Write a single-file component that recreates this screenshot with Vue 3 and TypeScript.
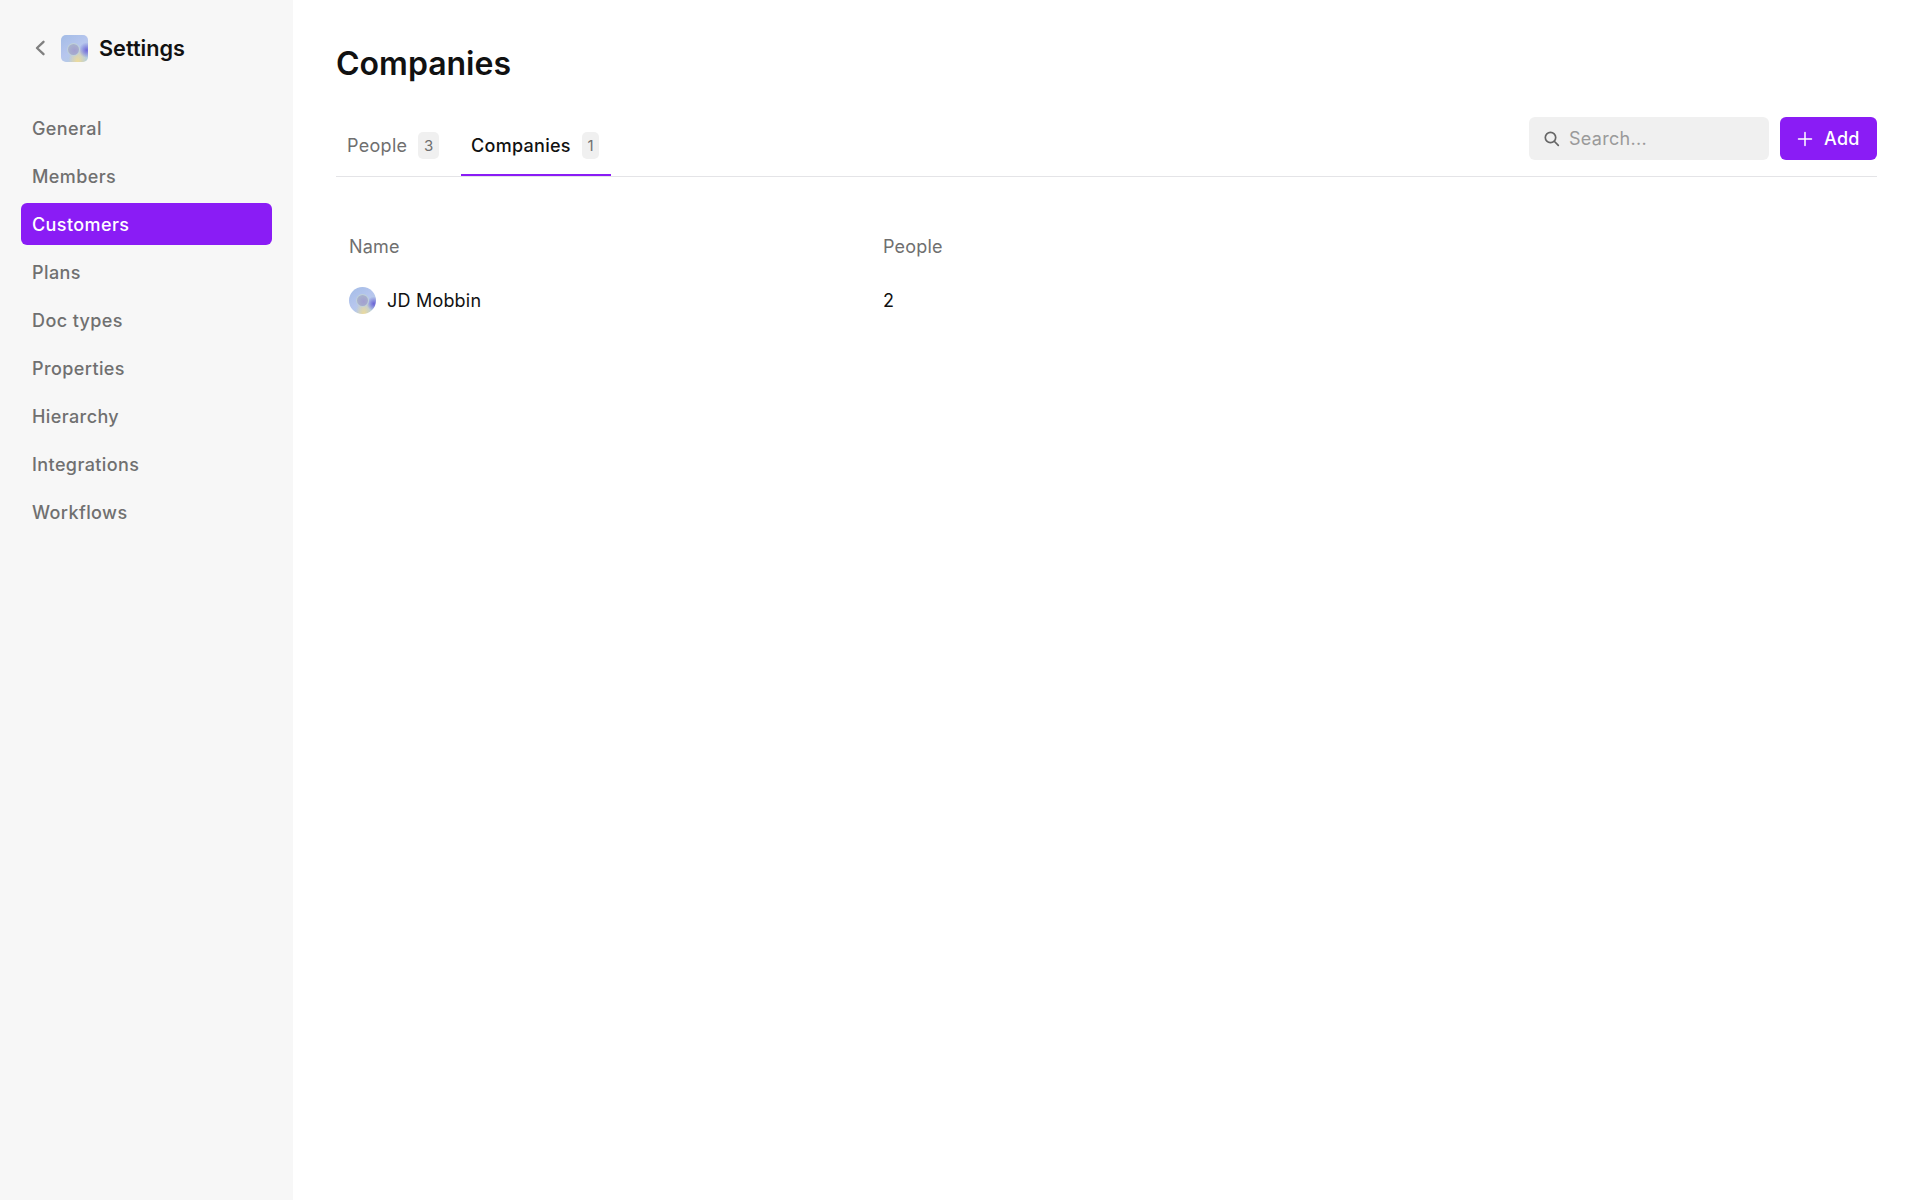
<template>
  <div class="app">
    <aside class="sidebar">
      <div class="side-head">
        <svg class="back" width="12" height="16" viewBox="0 0 12 16" fill="none">
          <path d="M9.5 1.8 3 8l6.5 6.2" stroke="#808080" stroke-width="2.4" stroke-linecap="round" stroke-linejoin="round" />
        </svg>
        <div class="logo"><span class="logo-dot" /></div>
        <span class="side-title">Settings</span>
      </div>
      <nav class="nav">
        <a v-for="item in navItems" :key="item" class="nav-item" :class="{ active: item === 'Customers' }">{{ item }}</a>
      </nav>
    </aside>

    <main class="main">
      <h1 class="title">Companies</h1>
      <div class="tabbar">
        <div class="tabs">
          <div v-for="tab in tabs" :key="tab.label" class="tab" :class="{ selected: tab.label === 'Companies' }">
            <span>{{ tab.label }}</span>
            <span class="count">{{ tab.count }}</span>
          </div>
        </div>
        <div class="actions">
          <div class="search">
            <svg width="17" height="17" viewBox="0 0 17 17" fill="none">
              <circle cx="7.5" cy="7.5" r="5.2" stroke="#666" stroke-width="1.7" />
              <path d="m11.5 11.5 3.8 3.8" stroke="#666" stroke-width="1.7" stroke-linecap="round" />
            </svg>
            <span class="placeholder">Search...</span>
          </div>
          <button class="add">
            <svg width="16" height="16" viewBox="0 0 16 16" fill="none">
              <path d="M8 1.5v13M1.5 8h13" stroke="#fff" stroke-width="1.5" stroke-linecap="round" />
            </svg>
            Add
          </button>
        </div>
      </div>

      <table class="table">
        <thead>
          <tr>
            <th class="col-name">Name</th>
            <th>People</th>
          </tr>
        </thead>
        <tbody>
          <tr v-for="row in rows" :key="row.name">
            <td>
              <div class="company">
                <div class="avatar"><span class="avatar-dot" /></div>
                {{ row.name }}
              </div>
            </td>
            <td>{{ row.people }}</td>
          </tr>
        </tbody>
      </table>
    </main>
  </div>
</template>

<script setup lang="ts">
const navItems: string[] = [
  'General',
  'Members',
  'Customers',
  'Plans',
  'Doc types',
  'Properties',
  'Hierarchy',
  'Integrations',
  'Workflows',
]

const tabs = [
  { label: 'People', count: 3 },
  { label: 'Companies', count: 1 },
]

const rows = [{ name: 'JD Mobbin', people: 2 }]
</script>

<style>
body {
  background: #fff;
}
</style>

<style scoped>
.app {
  display: flex;
  min-height: 1200px;
  font-family: Inter, "Liberation Sans", sans-serif;
  color: #111;
}

.sidebar {
  width: 293px;
  flex-shrink: 0;
  background: #f7f7f7;
  padding: 0 21px;
  box-sizing: border-box;
}

.side-head {
  display: flex;
  align-items: center;
  height: 96px;
  padding-left: 13px;
}

.back {
  margin-right: 15px;
}

.logo {
  width: 27px;
  height: 27px;
  border-radius: 5px;
  margin-right: 11px;
  position: relative;
  overflow: hidden;
  background:
    radial-gradient(circle at 95% 56%, #7069d8 0, rgba(112, 105, 216, 0) 26%),
    radial-gradient(ellipse at 62% 100%, #efdb98 0, rgba(239, 219, 152, 0) 40%),
    linear-gradient(145deg, #a3bce6 0%, #b7c6ee 50%, #b4d0dc 100%);
}

.logo-dot {
  position: absolute;
  left: 6px;
  top: 8px;
  width: 13px;
  height: 13px;
  box-sizing: border-box;
  border-radius: 50%;
  background: radial-gradient(circle at 60% 60%, #a29fd0 0, #a9b3cc 75%);
  border: 1.5px solid rgba(200, 222, 222, 0.75);
}

.side-title {
  font-size: 21.7px;
  font-weight: 600;
  color: #111;
}

.nav {
  display: flex;
  flex-direction: column;
  gap: 6px;
  margin-top: 11px;
}

.nav-item {
  display: flex;
  align-items: center;
  height: 42px;
  padding: 0 11px;
  border-radius: 6px;
  font-size: 18px;
  font-weight: 500;
  letter-spacing: 0.4px;
  color: #707070;
}

.nav-item.active {
  background: #8a1cf5;
  color: #fff;
}

.main {
  flex: 1;
  padding: 0 43px;
  min-width: 0;
}

.title {
  margin: 0;
  padding-top: 43px;
  font-size: 32px;
  line-height: 42px;
  font-weight: 600;
  color: #111;
}

.tabbar {
  display: flex;
  justify-content: space-between;
  align-items: flex-end;
  margin-top: 42px;
  height: 49px;
  border-bottom: 1.5px solid #e4e4e7;
}

.tabs {
  display: flex;
  gap: 11px;
}

.tab {
  display: flex;
  align-items: center;
  gap: 11px;
  height: 49px;
  padding: 0 11px 13px;
  box-sizing: border-box;
  font-size: 18px;
  letter-spacing: 0.3px;
  color: #6f6f6f;
}

.tab.selected {
  color: #111;
  padding-left: 10px;
  padding-right: 12px;
  font-weight: 500;
  box-shadow: inset 0 -2px 0 #8a1cf5;
}

.count {
  display: flex;
  align-items: center;
  justify-content: center;
  padding: 0 5.5px;
  height: 27px;
  border-radius: 5px;
  background: #f0f0f0;
  font-size: 15px;
  font-weight: 400;
  color: #6f6f6f;
}

.actions {
  display: flex;
  gap: 11px;
  align-self: flex-start;
  margin-top: -10px;
}

.search {
  display: flex;
  align-items: center;
  gap: 9px;
  width: 240px;
  height: 43px;
  padding-left: 14px;
  box-sizing: border-box;
  background: #f0f0f0;
  border-radius: 6px;
}

.placeholder {
  font-size: 18px;
  letter-spacing: 0.3px;
  color: #9a9a9a;
}

.add {
  display: flex;
  align-items: center;
  gap: 11px;
  height: 43px;
  width: 97px;
  padding: 0 0 0 17px;
  border: none;
  border-radius: 6px;
  background: #8a1cf5;
  color: #fff;
  font: 500 18px Inter, "Liberation Sans", sans-serif;
  letter-spacing: 0.3px;
}

.table {
  margin-top: 43px;
  border-collapse: collapse;
  width: 100%;
  font-size: 18px;
  letter-spacing: 0.2px;
}

.table th {
  text-align: left;
  font-weight: 400;
  color: #6f6f6f;
  height: 53px;
  padding: 0 13px;
}

.table .col-name {
  width: 508px;
}

.table td {
  height: 54px;
  padding: 0 13px;
  color: #111;
}

.company {
  display: flex;
  align-items: center;
  gap: 11px;
}

.avatar {
  width: 27px;
  height: 27px;
  border-radius: 50%;
  position: relative;
  overflow: hidden;
  background:
    radial-gradient(circle at 92% 62%, #6a62d6 0, rgba(106, 98, 214, 0) 24%),
    radial-gradient(ellipse at 55% 102%, #efdb98 0, rgba(239, 219, 152, 0) 40%),
    linear-gradient(145deg, #a3bce6 0%, #b7c6ee 50%, #b4d0dc 100%);
}

.avatar-dot {
  position: absolute;
  left: 7px;
  top: 7px;
  width: 13px;
  height: 13px;
  box-sizing: border-box;
  border-radius: 50%;
  background: radial-gradient(circle at 60% 60%, #a29fd0 0, #a9b3cc 75%);
  border: 1.5px solid rgba(200, 222, 222, 0.75);
}
</style>
